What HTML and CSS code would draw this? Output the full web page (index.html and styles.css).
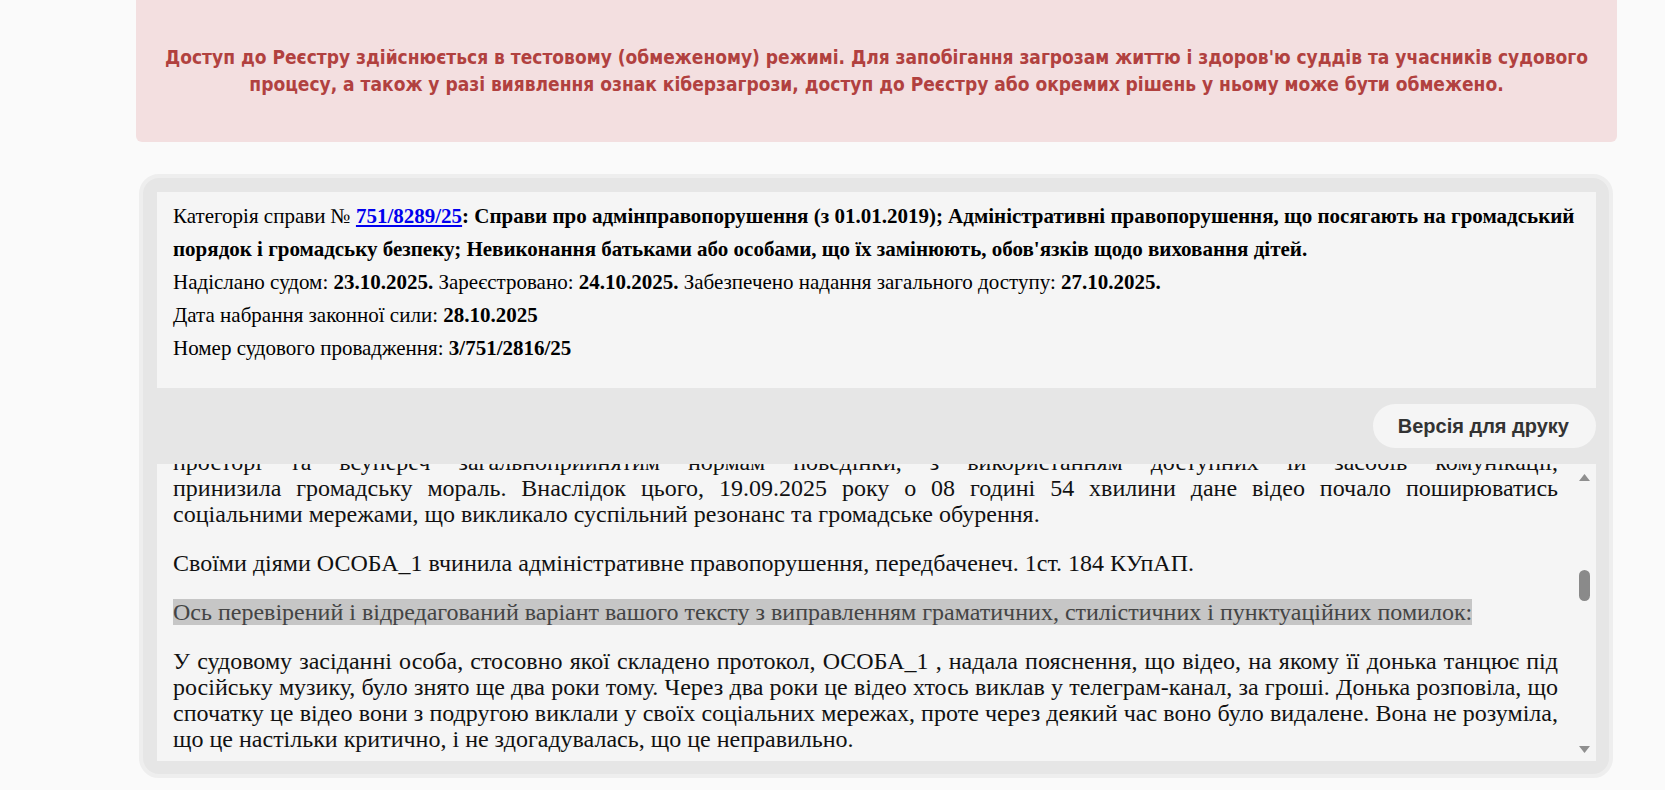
FILE: index.html
```html
<!DOCTYPE html>
<html lang="uk">
<head>
<meta charset="utf-8">
<title>Єдиний державний реєстр судових рішень</title>
<link rel="stylesheet" href="styles.css">
</head>
<body>
<div class="page">
  <div class="notice">
    <p class="notice-text">Доступ до Реєстру здійснюється в тестовому (обмеженому) режимі. Для запобігання загрозам життю і здоров'ю суддів та учасників судового процесу, а також у разі виявлення ознак кіберзагрози, доступ до Реєстру або окремих рішень у ньому може бути обмежено.</p>
  </div>

  <div class="card">
    <div class="meta">
      <div class="meta-line">Категорія справи № <a class="case-link" href="#">751/8289/25</a><b>: Справи про адмінправопорушення (з 01.01.2019); Адміністративні правопорушення, що посягають на громадський порядок і громадську безпеку; Невиконання батьками або особами, що їх замінюють, обов'язків щодо виховання дітей.</b></div>
      <div class="meta-line">Надіслано судом: <b>23.10.2025.</b> Зареєстровано: <b>24.10.2025.</b> Забезпечено надання загального доступу: <b>27.10.2025.</b></div>
      <div class="meta-line">Дата набрання законної сили: <b>28.10.2025</b></div>
      <div class="meta-line">Номер судового провадження: <b>3/751/2816/25</b></div>
    </div>

    <div class="toolbar">
      <button class="print-btn" type="button">Версія для друку</button>
    </div>

    <div class="doc-wrap">
      <div class="doc" id="doc">
        <p class="doc-right">Справа № 751/8289/25</p>
        <p class="doc-right">Провадження № 3/751/2816/25</p>
        <p class="doc-center"><b>П О С Т А Н О В А</b></p>
        <p class="doc-center"><b>ІМЕНЕМ УКРАЇНИ</b></p>
        <p>23 жовтня 2025 року</p>
        <p>Суддя районного суду ОСОБА_2 , розглянувши матеріали справи про адміністративне правопорушення, які надійшли від відділу поліції, відносно ОСОБА_1 , ІНФОРМАЦІЯ_1 , громадянки України, зареєстрованої та проживаючої за адресою: АДРЕСА_1 , за вчинення адміністративного правопорушення, передбаченого ч. 1 ст. 184 Кодексу України про адміністративні правопорушення,</p>
        <p class="doc-center"><b>В С Т А Н О В И В:</b></p>
        <p>Відповідно до протоколу про адміністративне правопорушення серії ВАД № 000000 від 01.10.2025, ОСОБА_1 , будучи матір'ю неповнолітньої ОСОБА_3 , ІНФОРМАЦІЯ_2 , ухилилася від виконання передбачених законодавством обов'язків щодо забезпечення необхідних умов життя, навчання та виховання неповнолітньої дитини, що виразилось у відсутності належного контролю за її поведінкою та діяльністю в мережі Інтернет.</p>
        <div class="para">
          <div class="para-head">Так, 18.09.2025 року неповнолітня ОСОБА_3 , перебуваючи за місцем свого проживання, здійснила відеозапис, на якому вона танцює під музичний твір російською мовою, та розмістила вказане відео у відкритому доступі у мережі Інтернет, чим, на думку складача протоколу, завдала шкоди вихованню в дусі поваги до державної мови, до історії та культури українського народу у воєнний час, а також у такий спосіб (у тому числі через недостатню увагу з боку матері до дозвілля доньки), своєю поведінкою у публічному просторі та всупереч загальноприйнятим нормам поведінки, з використанням доступних їй засобів комунікації,</div>
          <div class="para-tail">принизила громадську мораль. Внаслідок цього, 19.09.2025 року о 08 годині 54 хвилини дане відео почало поширюватись соціальними мережами, що викликало суспільний резонанс та громадське обурення.</div>
        </div>
        <p>Своїми діями ОСОБА_1 вчинила адміністративне правопорушення, передбаченеч. 1ст. 184 КУпАП.</p>
        <p class="doc-mark"><span class="mark">Ось перевірений і відредагований варіант вашого тексту з виправленням граматичних, стилістичних і пунктуаційних помилок:</span></p>
        <p>У судовому засіданні особа, стосовно якої складено протокол, ОСОБА_1 , надала пояснення, що відео, на якому її донька танцює під російську музику, було знято ще два роки тому. Через два роки це відео хтось виклав у телеграм-канал, за гроші. Донька розповіла, що спочатку це відео вони з подругою виклали у своїх соціальних мережах, проте через деякий час воно було видалене. Вона не розуміла, що це настільки критично, і не здогадувалась, що це неправильно.</p>
        <p>ОСОБА_1 вину у вчиненні адміністративного правопорушення визнала, у скоєному щиро розкаялась, пояснила, що провела з донькою виховну бесіду, роз'яснила їй неприпустимість подібної поведінки та зобов'язалась у подальшому належним чином контролювати її діяльність у мережі Інтернет.</p>
        <p>Вислухавши пояснення особи, яка притягується до адміністративної відповідальності, дослідивши матеріали справи, суд приходить до висновку, що вина ОСОБА_1 у вчиненні адміністративного правопорушення, передбаченого ч. 1 ст. 184 КУпАП, повністю доведена та підтверджується зібраними у справі доказами, а саме: протоколом про адміністративне правопорушення, рапортом працівника поліції, письмовими поясненнями ОСОБА_1 , а також іншими матеріалами справи, які у своїй сукупності є належними та допустимими доказами.</p>
        <p>Відповідно до ч. 1 ст. 184 КУпАП ухилення батьків або осіб, які їх замінюють, від виконання передбачених законодавством обов'язків щодо забезпечення необхідних умов життя, навчання та виховання неповнолітніх дітей тягне за собою попередження або накладення штрафу від п'ятдесяти до ста неоподатковуваних мінімумів доходів громадян.</p>
        <p>Згідно зі ст. 150 Сімейного кодексу України батьки зобов'язані виховувати дитину в дусі поваги до прав та свобод інших людей, любові до своєї сім'ї та родини, свого народу, своєї Батьківщини, піклуватися про здоров'я дитини, її фізичний, духовний та моральний розвиток.</p>
        <p>Статтею 245 КУпАП передбачено, що завданнями провадження в справах про адміністративні правопорушення є своєчасне, всебічне, повне і об'єктивне з'ясування обставин кожної справи, вирішення її в точній відповідності з законом, забезпечення виконання винесеної постанови, а також виявлення причин та умов, що сприяють вчиненню адміністративних правопорушень, запобігання правопорушенням, виховання громадян у дусі додержання законів, зміцнення законності.</p>
        <p>При накладенні адміністративного стягнення суд враховує характер вчиненого правопорушення, особу порушника, ступінь її вини, майновий стан, обставини, що пом'якшують і обтяжують відповідальність. Обставиною, що пом'якшує відповідальність, суд визнає щире розкаяння винної. Обставин, що обтяжують відповідальність, судом не встановлено.</p>
        <p>З урахуванням наведеного, суд вважає за можливе застосувати до ОСОБА_1 адміністративне стягнення у виді попередження, що буде достатнім для її виправлення та запобігання вчиненню нових правопорушень.</p>
        <p>Керуючись ст. ст. 23, 24, 26, 33-35, 184, 221, 245, 251, 252, 280, 283, 284 КУпАП, суддя,</p>
        <p class="doc-center"><b>П О С Т А Н О В И В:</b></p>
        <p>ОСОБА_1 визнати винною у вчиненні адміністративного правопорушення, передбаченого ч. 1 ст. 184 КУпАП, та застосувати до неї адміністративне стягнення у виді попередження.</p>
        <p>Постанова може бути оскаржена до апеляційного суду протягом десяти днів з дня її винесення. Апеляційна скарга подається через суд, який виніс постанову.</p>
        <p>Постанова набирає законної сили після закінчення строку подання апеляційної скарги, якщо її не було оскаржено.</p>
        <p>Суддя ОСОБА_2</p>
      </div>
      <div class="vscroll" aria-hidden="true">
        <svg class="vscroll-arrow vscroll-up" width="11" height="7" viewBox="0 0 11 7"><path d="M0 7 L5.5 0 L11 7 Z" fill="#8f8f8f"/></svg>
        <div class="vscroll-thumb"></div>
        <svg class="vscroll-arrow vscroll-down" width="11" height="7" viewBox="0 0 11 7"><path d="M0 0 L5.5 7 L11 0 Z" fill="#8f8f8f"/></svg>
      </div>
    </div>
  </div>
</div>
<script src="script.js"></script>
</body>
</html>
```

FILE: styles.css
```css
html, body {
  margin: 0;
  padding: 0;
}
body {
  background: #fafafa;
  font-family: "Liberation Serif", "Times New Roman", serif;
  color: #000;
}
.page {
  margin-left: 136px;
  width: 1481px;
}
.notice {
  background: #f3dfe0;
  border-radius: 0 0 6px 6px;
  padding: 44px 24px 44px;
}
.notice-text {
  margin: 0;
  text-align: center;
  font-family: "DejaVu Sans Condensed", "DejaVu Sans", sans-serif;
  font-weight: 700;
  font-size: 19px;
  line-height: 27px;
  color: #b1413f;
}
.card {
  margin: 32px 4px 0 3px;
  background: #e6e6e6;
  border: 4px solid #eeeeee;
  border-radius: 20px;
  padding: 14px 13px 13px 14px;
}
.meta {
  background: #f5f5f5;
  padding: 8px 16px 23px;
  font-size: 21px;
  line-height: 33px;
}
.case-link {
  color: #0000ee;
  font-weight: 700;
  text-decoration: underline;
}
.toolbar {
  display: flex;
  justify-content: flex-end;
  padding: 16px 0;
}
.print-btn {
  height: 44px;
  padding: 0 27px 0 25px;
  border: none;
  border-radius: 22px;
  background: #f5f5f5;
  font-family: "Liberation Sans", Arial, sans-serif;
  font-weight: 700;
  font-size: 20px;
  color: #333;
  cursor: pointer;
}
.doc-wrap {
  position: relative;
}
.doc {
  background: #f5f5f5;
  height: 297px;
  overflow-y: scroll;
  scrollbar-width: none;
  padding: 0 38px 0 16px;
  font-size: 24px;
  line-height: 26px;
  text-align: justify;
  color: #111;
}
.doc p, .doc .para {
  margin: 0 0 23px;
}
.para-head {
  text-align-last: justify;
}
.doc-right { text-align: right; }
.doc-center { text-align: center; }
.doc-mark { color: #444; }
.mark { background: #c6c6c6; }

.vscroll {
  position: absolute;
  top: 0;
  bottom: 0;
  right: 3px;
  width: 17px;
}
.vscroll-arrow {
  position: absolute;
  left: 3px;
  display: block;
}
.vscroll-up { top: 10px; }
.vscroll-down { bottom: 8px; }
.vscroll-thumb {
  position: absolute;
  left: 3px;
  width: 11px;
  top: 106px;
  height: 31px;
  border-radius: 6px;
  background: #8a8a8a;
}
```

FILE: script.js
```js
(function () {
  var doc = document.getElementById('doc');
  function place() {
    var tail = doc.querySelector('.para-tail');
    var r = tail.getBoundingClientRect();
    var d = doc.getBoundingClientRect();
    doc.scrollTop = doc.scrollTop + (r.top - d.top) - 11;
  }
  place();
  window.addEventListener('load', place);
})();
```
